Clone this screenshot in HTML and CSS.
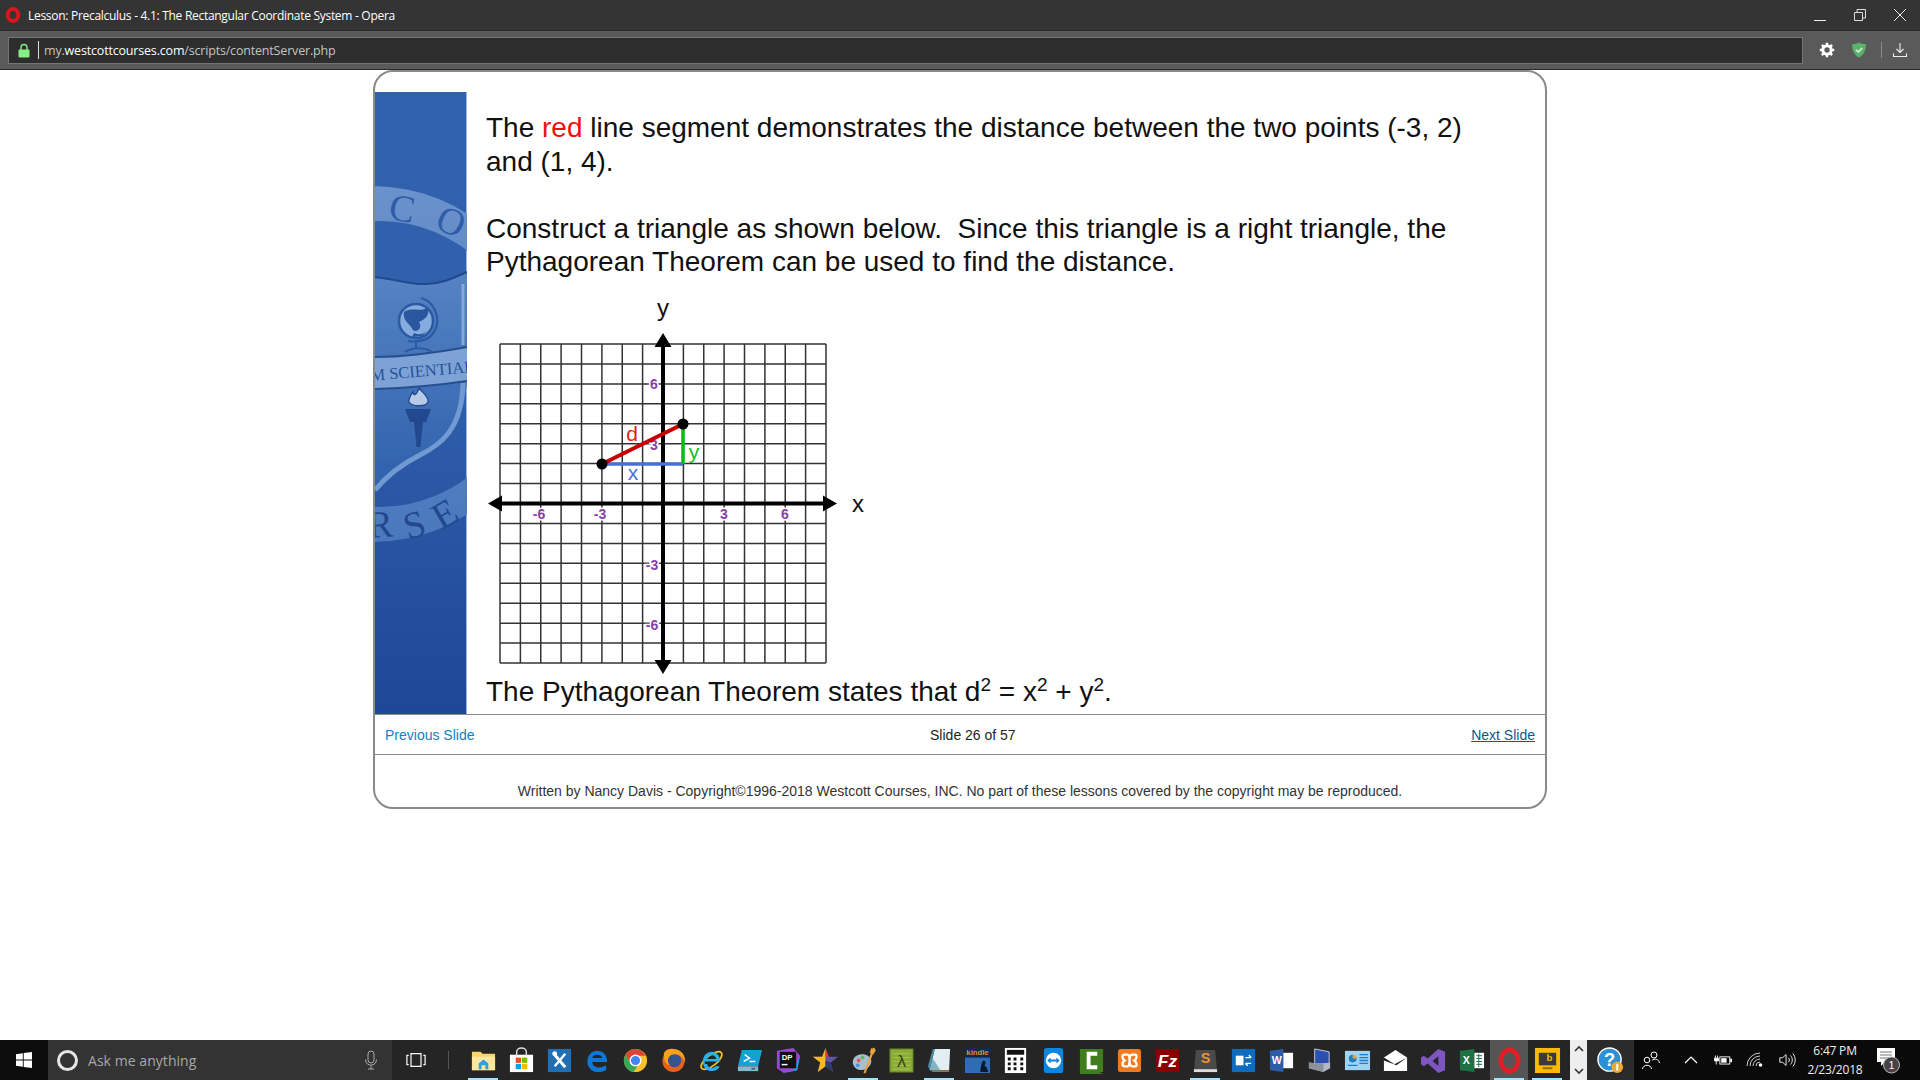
FILE: index.html
```html
<!DOCTYPE html>
<html lang="en">
<head>
<meta charset="utf-8">
<title>Lesson: Precalculus - 4.1: The Rectangular Coordinate System - Opera</title>
<link rel="stylesheet" href="styles.css">
</head>
<body>
<div class="window">
  <header class="titlebar">
    <svg class="opera-mini" viewBox="0 0 16 16"><ellipse cx="8" cy="8" rx="5.300" ry="6" fill="none" stroke="#dc141e" stroke-width="3.800"/></svg>
    <span class="title-text">Lesson: Precalculus - 4.1: The Rectangular Coordinate System - Opera</span>
    <div class="win-controls">
      <svg class="win-btn" viewBox="0 0 14 14"><path d="M1 12.500H13" stroke="#eee" fill="none"/></svg>
      <svg class="win-btn" viewBox="0 0 14 14"><path d="M1.500 4.500H9.500V12.500H1.500ZM4 4.500V1.500H12.500V10H9.500" stroke="#ddd" fill="none"/></svg>
      <svg class="win-btn" viewBox="0 0 14 14"><path d="M1 1L13 13M13 1L1 13" stroke="#eee" fill="none"/></svg>
    </div>
  </header>
  <div class="addressbar">
    <div class="urlfield">
      <svg class="lock" viewBox="0 0 12 15"><path d="M3 7V4.500a3 3 0 0 1 6 0V7" fill="none" stroke="#86f086" stroke-width="1.400"/><rect x="0.500" y="6.500" width="11" height="8" rx="1" fill="#86f086"/></svg>
      <span class="url-sep"></span>
      <span class="url"><span class="dim">my.</span>westcottcourses.com<span class="dim">/scripts/contentServer.php</span></span>
    </div>
    <div class="toolicons">
      <svg class="tool" viewBox="0 0 16 16"><circle cx="8" cy="8" r="4.200" fill="none" stroke="#fff" stroke-width="3"/><path d="M8 0.800V3.500M8 12.500V15.200M0.800 8H3.500M12.500 8H15.200M2.900 2.900L4.800 4.800M11.200 11.200L13.100 13.100M13.100 2.900L11.200 4.800M4.800 11.200L2.900 13.100" stroke="#fff" stroke-width="2.400"/></svg>
      <svg class="tool" viewBox="0 0 16 16"><path d="M8 0.500C10 1.500 12 2 14.800 2 14.900 8 13 13 8 15.500 3 13 1.100 8 1.200 2 4 2 6 1.500 8 .5Z" fill="#5bb36a"/><path d="M5 7.800L7.300 10 11.200 6" fill="none" stroke="#e8f5e8" stroke-width="1.500"/></svg>
      <span class="tool-sep"></span>
      <svg class="tool" viewBox="0 0 16 16"><path d="M8 1V10M4.500 7L8 10.500 11.500 7M1.500 11.500V14.500H14.500V11.500" fill="none" stroke="#eee" stroke-width="1.100"/></svg>
    </div>
  </div>

  <main class="page">
    <article class="card">
      <div class="slide">
        <svg class="sidebar" viewBox="375 92 92 622" preserveAspectRatio="none" aria-hidden="true">
          <defs>
            <linearGradient id="sb" x1="0" y1="0" x2="0" y2="1">
              <stop offset="0" stop-color="#3162ae"/><stop offset=".45" stop-color="#3060ab"/><stop offset="1" stop-color="#1f4797"/>
            </linearGradient>
            <linearGradient id="ringfill" gradientUnits="userSpaceOnUse" x1="0" y1="186" x2="0" y2="545">
              <stop offset="0" stop-color="#6a92cc"/><stop offset=".4" stop-color="#5b85c4"/><stop offset="1" stop-color="#4a78bd"/>
            </linearGradient>
            <linearGradient id="shieldfill" gradientUnits="userSpaceOnUse" x1="0" y1="280" x2="0" y2="470">
              <stop offset="0" stop-color="#5482c3"/><stop offset="1" stop-color="#3263ae"/>
            </linearGradient>
            <filter id="soft"><feGaussianBlur stdDeviation="0.500"/></filter>
          </defs>
          <rect x="375" y="92" width="92" height="622" fill="url(#sb)"/>
          <rect x="466" y="92" width="1" height="622" fill="#9db6dc"/>
          <g filter="url(#soft)">
            <path d="M194 364a178 178 0 1 0 356 0a178 178 0 1 0 -356 0ZM237 364a143 143 0 1 0 286 0a143 143 0 1 0 -286 0Z" fill="url(#ringfill)" fill-rule="evenodd"/>
            <path d="M375 277C400 280 412 285 426 284 442 284 455 277 467 272V380C465 425 440 445 420 455 400 465 385 480 375 490Z" fill="url(#shieldfill)"/>
            <path d="M463 383C462 430 440 445 420 455 400 465 385 478 375 490" fill="none" stroke="#7199d2" stroke-width="5"/>
            <path d="M463 284V345" fill="none" stroke="#87a8da" stroke-width="3"/>
            <path d="M375 277C400 280 412 285 426 284 442 284 455 277 467 272" fill="none" stroke="#234a8f" stroke-width="2"/>
            <path d="M375 357C405 357 440 352 467 347V381C440 385 405 388 375 389Z" fill="#7ca2d6"/>
            <path d="M375 357C405 357 440 352 467 347M375 389C405 388 440 385 467 381" fill="none" stroke="#27508f" stroke-width="2"/>
            <circle cx="416" cy="321" r="17" fill="#86abdf" stroke="#2c5aa3" stroke-width="2.500"/>
            <path d="M404 312C410 307 420 312 427 308 431 315 424 320 419 322 423 328 417 333 413 330 410 324 402 320 404 312Z" fill="#2a579f"/>
            <path d="M428 330C423 335 418 335 414 333L412 337 422 336Z" fill="#2a579f"/>
            <path d="M421 298C434 301 441 318 435 330 431 339 421 343 408 341M416 342V349M405 352C412 347 425 347 432 352" fill="none" stroke="#2c5aa3" stroke-width="2.200"/>
            <path d="M419 388C423 393 429 397 428 402 426 407 412 407 409 402 408 398 411 395 413 392 414 396 416 396 419 388Z" fill="#b7cbe9" stroke="#234a8f" stroke-width="1.400"/>
            <path d="M405 409H431L426 422H410ZM414 422H423L420.500 447H416.500Z" fill="#234a8f"/>
          </g>
          <text class="seal-big" x="400" y="221" transform="rotate(10 400 221)">C</text>
          <text class="seal-big" x="446" y="233" transform="rotate(24 446 233)">O</text>
          <text class="seal-mid" x="371" y="381" transform="rotate(-5 371 381)">M SCIENTIAE</text>
          <text class="seal-low" x="381" y="537" transform="rotate(-3 381 537)">R</text>
          <text class="seal-low" x="418" y="537" transform="rotate(-17 418 537)">S</text>
          <text class="seal-low" x="451" y="525" transform="rotate(-30 451 525)">E</text>
        </svg>
        <section class="lesson">
          <p class="para">The <span class="red">red</span> line segment demonstrates the distance between the two points (-3, 2) and (1, 4).</p>
          <p class="para">Construct a triangle as shown below.&nbsp; Since this triangle is a right triangle, the Pythagorean Theorem can be used to find the distance.</p>
          <svg class="graph" viewBox="486 285 400 388" role="img" aria-label="Coordinate grid with a right triangle">
            <path class="grid" d="M500 343V662M520.400 343V662M540.750 343V662M561.100 343V662M581.500 343V662M601.900 343V662M622.250 343V662M642.600 343V662M683.400 343V662M703.750 343V662M724.100 343V662M744.500 343V662M764.900 343V662M785.250 343V662M805.600 343V662M826 343V662M500 343H826M500 362.900H826M500 382.900H826M500 402.800H826M500 422.750H826M500 442.700H826M500 462.600H826M500 482.600H826M500 522.500H826M500 542.400H826M500 562.300H826M500 582.300H826M500 602.200H826M500 622.200H826M500 642.100H826M500 662H826"/>
            <path class="axis" d="M663 340V665M497 502.500H829"/>
            <path d="M488 502.500L502 494.500V510.500ZM837 502.500L823 494.500V510.500ZM663 332L654.500 346H671.500ZM663 673L654.500 659H671.500Z" fill="#000"/>
            <text class="tick" x="654" y="388">6</text>
            <text class="tick" x="654" y="449">3</text>
            <text class="tick" x="652" y="569">-3</text>
            <text class="tick" x="652" y="629">-6</text>
            <text class="tick" x="539" y="518">-6</text>
            <text class="tick" x="600" y="518">-3</text>
            <text class="tick" x="724" y="518">3</text>
            <text class="tick" x="785" y="518">6</text>
            <path class="seg-blue" d="M602 463H683"/>
            <path class="seg-green" d="M683 423V463"/>
            <path class="seg-red" d="M602 463L683 423"/>
            <circle cx="602" cy="463" r="5.500"/><circle cx="683" cy="423" r="5.500"/>
            <text class="lab-red" x="632" y="440">d</text>
            <text class="lab-green" x="694" y="458">y</text>
            <text class="lab-blue" x="633" y="479">x</text>
            <text class="axis-name" x="858" y="511">x</text>
            <text class="axis-name" x="663" y="315">y</text>
          </svg>
          <p class="para">The Pythagorean Theorem states that d<sup>2</sup> = x<sup>2</sup> + y<sup>2</sup>.</p>
        </section>
      </div>
      <nav class="slidenav">
        <a class="prev">Previous Slide</a>
        <span>Slide 26 of 57</span>
        <a class="next">Next Slide</a>
      </nav>
      <footer class="legal">Written by Nancy Davis - Copyright©1996-2018 Westcott Courses, INC. No part of these lessons covered by the copyright may be reproduced.</footer>
    </article>
  </main>

  <div class="taskbar">
    <div class="start"><svg class="winlogo" viewBox="0 0 16 16"><path d="M0 2.200L6.800 1.200V7.600H0ZM7.700 1.100L16 0V7.600H7.700ZM0 8.400H6.800V14.800L0 13.800ZM7.700 8.400H16V16L7.700 14.900Z" fill="#fff"/></svg></div>
    <div class="search">
      <span class="cortana"></span>
      <span class="ask">Ask me anything</span>
      <svg class="mic" viewBox="0 0 14 20"><rect x="4" y="1" width="6" height="12" rx="3" fill="none" stroke="#aaa"/><path d="M1.500 9.500C1.500 17 12.500 17 12.500 9.500M7 15.500V19M4 19H10" fill="none" stroke="#aaa"/></svg>
    </div>
    <div class="taskview"><svg class="tv" viewBox="0 0 22 16"><path d="M5.500 1H16.500V15H5.500ZM3 3H1V13H3M19 3H21V13H19" fill="none" stroke="#fff" stroke-width="1.300"/></svg><span class="tb-sep"></span></div>
    <div class="apps">
      <span class="app on"><svg class="ic" viewBox="0 0 28 28"><path d="M2 5H11L13 7H26V24H2Z" fill="#f5d56c"/><path d="M2 10H26V24H2Z" fill="#fbe79e"/><path d="M9 23V17L14 13 19 17V23H16V19H12V23Z" fill="#2f9fe0"/></svg></span>
      <span class="app"><svg class="ic" viewBox="0 0 28 28"><path d="M2 8H26V26H2Z" fill="#fff"/><path d="M9 9V5a5 4 0 0 1 10 0V9" fill="none" stroke="#ddd" stroke-width="1.500"/><rect x="8" y="11" width="5.500" height="5.500" fill="#ef4f23"/><rect x="14.500" y="11" width="5.500" height="5.500" fill="#7eba00"/><rect x="8" y="17.500" width="5.500" height="5.500" fill="#00a4ef"/><rect x="14.500" y="17.500" width="5.500" height="5.500" fill="#ffb900"/></svg></span>
      <span class="app"><svg class="ic" viewBox="0 0 28 28"><rect x="2" y="2" width="24" height="24" fill="#1f6fb7"/><path d="M9 8L20 21" stroke="#fff" stroke-width="3"/><path d="M20 7L9 20" stroke="#fff" stroke-width="2.400"/><circle cx="9" cy="7" r="2.500" fill="#fff"/></svg></span>
      <span class="app"><svg class="ic" viewBox="0 0 28 28"><path d="M7 15.500H24C24 8 19 4 14 4 8 4 3.500 9 3.500 15 3.500 22 9 26 14.500 26 18 26 21 25 23 23.500V19C19 22 9.500 23 8.500 15.500M8.500 11.500C9 9 11.500 8 13.500 8 16 8 18.500 9 19 11.500Z" fill="#0f78d4" fill-rule="evenodd"/></svg></span>
      <span class="app"><svg class="ic" viewBox="0 0 28 28"><circle cx="14" cy="14" r="12" fill="#fbc02d"/><path d="M14 2A12 12 0 0 0 3.500 8L9 17 14 9H24.500A12 12 0 0 0 14 2Z" fill="#db4437"/><path d="M3.500 8A12 12 0 0 0 12 26L17.500 18 9 17Z" fill="#3aa757"/><circle cx="14" cy="14" r="5.500" fill="#4285f4" stroke="#fff" stroke-width="1.500"/></svg></span>
      <span class="app"><svg class="ic" viewBox="0 0 28 28"><circle cx="14" cy="14.500" r="11.500" fill="#e8611c"/><circle cx="15" cy="14" r="7" fill="#34548f"/><path d="M4 9C3 4 9 1 14 2 21 2 27 8 26 16 24 9 17 6 12 8 8 10 7 15 10 19 6 18 4 13 4 9Z" fill="#f6a21d"/></svg></span>
      <span class="app"><svg class="ic" viewBox="0 0 28 28"><ellipse cx="14" cy="14" rx="13" ry="5.500" transform="rotate(-38 14 14)" fill="none" stroke="#f2c21a" stroke-width="1.800"/><path d="M7 15H23C23 9 19 5 14.500 5 9 5 5 9.500 5 15 5 21 9 25 14.500 25 18 25 21 23.500 22.500 20H18C16 23 10 22 9.500 17.500H7ZM9.500 12.500C10 10 12 8.500 14.500 8.500 16.500 8.500 18.500 10 19 12.500Z" fill="#2ab0e8" fill-rule="evenodd"/></svg></span>
      <span class="app"><svg class="ic" viewBox="0 0 28 28"><path d="M6 3H27L23 20H2Z" fill="#16a0d8"/><path d="M2 20H23V25H2Z" fill="#8fb5c6"/><path d="M9 8L14 11.500 8 15M14 15H20" fill="none" stroke="#fff" stroke-width="1.500"/><rect x="16" y="21.500" width="4" height="2" fill="#3e6a80"/></svg></span>
      <span class="app"><svg class="ic" viewBox="0 0 28 28"><path d="M3 4L20 1 27 9 24 24 10 27 3 22Z" fill="#9b45d6"/><path d="M20 24L27 9 24 24 10 27Z" fill="#1e9fe8"/><rect x="6" y="5" width="17" height="17" fill="#111"/><text class="dp" x="8" y="13">DP</text><rect x="8" y="17.500" width="6" height="1.500" fill="#fff"/></svg></span>
      <span class="app"><svg class="ic" viewBox="0 0 28 28"><path d="M14 1L17.500 10H27L19.500 16 22 26 14 20 6 26 8.500 16 1 10H10.500Z" fill="#5f56a8"/><path d="M14 1L14 20 6 26 8.500 16 1 10H10.500Z" fill="#f7b81f"/><path d="M14 1L17.500 10H14Z" fill="#d93a36"/><path d="M14 20L22 26 19.500 16 14 14Z" fill="#2e3b6e"/></svg></span>
      <span class="app on"><svg class="ic" viewBox="0 0 28 28"><path d="M3 17C2 10 9 6 16 8 22 10 24 15 20 20 15 26 5 25 3 17Z" fill="#a9bfd0"/><circle cx="9" cy="14" r="2" fill="#e85a4f"/><circle cx="13" cy="11" r="2" fill="#5fb760"/><circle cx="8" cy="19" r="2" fill="#4a8fe0"/><path d="M25 1L15 27" stroke="#e8a33d" stroke-width="2.200"/><path d="M22 1L27 3 24 8 20.500 6Z" fill="#e8a33d"/></svg></span>
      <span class="app"><svg class="ic" viewBox="0 0 28 28"><rect x="2" y="2" width="24" height="24" fill="#8aab35" stroke="#5d7a21"/><path d="M5 7H23M5 11H23M5 15H23M5 19H23M5 23H23" stroke="#a6c654"/><text class="lam" x="14" y="21">λ</text></svg></span>
      <span class="app on"><svg class="ic" viewBox="0 0 28 28"><path d="M9 2H25L24 24H4Z" fill="#e3eef2"/><path d="M9 2L4 24 2 20 7 2Z" fill="#4d8a9e"/><path d="M7 12L4 24H15Z" fill="#7fb4c4"/><path d="M7 24H24V26H6Z" fill="#8a7a55"/></svg></span>
      <span class="app"><svg class="ic" viewBox="0 0 28 28"><rect x="1" y="1" width="26" height="26" rx="1" fill="#0c2a52"/><path d="M1 11H27V27H1Z" fill="#2f6cb5"/><text class="kin" x="14" y="8">kindle</text><path d="M17 26C17 21 18 17 20 14 23 14 23 18 21 19 24 21 25 24 25 26Z" fill="#08182f"/></svg></span>
      <span class="app"><svg class="ic" viewBox="0 0 28 28"><rect x="3" y="1" width="22" height="26" fill="#fff"/><rect x="5" y="3" width="18" height="5" fill="#111"/><path d="M6 11h3v3H6zM12 11h3v3h-3zM19 11h3v3h-3zM6 16h3v3H6zM12 16h3v3h-3zM19 16h3v3h-3zM6 21h3v3H6zM12 21h3v3h-3zM19 21h3v3h-3z" fill="#111"/></svg></span>
      <span class="app"><svg class="ic" viewBox="0 0 28 28"><rect x="4" y="1" width="20" height="26" rx="3" fill="#0e86e0"/><circle cx="14" cy="14" r="8" fill="#fff"/><path d="M7.500 14L11 11V13H17V11L20.500 14 17 17V15H11V17Z" fill="#0e86e0"/></svg></span>
      <span class="app"><svg class="ic" viewBox="0 0 28 28"><path d="M2 2H26V26H22L26 28H2Z" fill="#3f7d1e"/><path d="M20 7H11V21H20" fill="none" stroke="#fff" stroke-width="4"/></svg></span>
      <span class="app"><svg class="ic" viewBox="0 0 28 28"><rect x="2" y="2" width="24" height="24" rx="3" fill="#ee7b22"/><path d="M9 8H12C14 8 14 12 14 14 14 12 14 8 17 8H20C22 8 22 12 19 14 22 16 22 20 20 20H17C14 20 14 16 14 14 14 16 14 20 12 20H9C6 20 6 16 9 14 6 12 6 8 9 8Z" fill="none" stroke="#fff" stroke-width="2.400"/></svg></span>
      <span class="app"><svg class="ic" viewBox="0 0 28 28"><rect x="2" y="2" width="24" height="24" fill="#8a0000"/><text class="fz" x="14" y="21">Fz</text></svg></span>
      <span class="app on"><svg class="ic" viewBox="0 0 28 28"><path d="M4 3H24L26 25H2Z" fill="#4a4a4a"/><path d="M2 23H26V26H2Z" fill="#ddd"/><text class="sub" x="14" y="17">S</text></svg></span>
      <span class="app"><svg class="ic" viewBox="0 0 28 28"><rect x="2" y="2" width="24" height="24" fill="#0f6cbd"/><rect x="6" y="9" width="8" height="10" fill="#fff"/><path d="M16 11H22M22 11L19.500 8.500M22 17H16M16 17L18.500 19.500" fill="none" stroke="#fff" stroke-width="1.500"/></svg></span>
      <span class="app"><svg class="ic" viewBox="0 0 28 28"><rect x="13" y="6" width="13" height="16" fill="#fff"/><path d="M2 4L16 2V26L2 24Z" fill="#2b5da8"/><text class="xl" x="4" y="18">W</text></svg></span>
      <span class="app"><svg class="ic" viewBox="0 0 28 28"><path d="M9 2L24 5V17L9 18Z" fill="#2c4fb0" stroke="#c4cfe0"/><path d="M3 16L18 18 25 16V22L18 26 3 22Z" fill="#b3b9c2"/><path d="M3 16L18 18V26L3 22Z" fill="#8b929c"/></svg></span>
      <span class="app"><svg class="ic" viewBox="0 0 28 28"><rect x="1" y="4" width="26" height="20" fill="#9fd3f0"/><circle cx="9" cy="12" r="4" fill="#1e7fc4"/><path d="M9 12V8A4 4 0 0 1 13 12Z" fill="#f2a33a"/><path d="M16 8H25M16 11H25M16 14H25M16 17H25M4 19H14" stroke="#1e7fc4" stroke-width="1.300"/></svg></span>
      <span class="app"><svg class="ic" viewBox="0 0 28 28"><path d="M2 11L14 3 26 11V25H2Z" fill="#fff"/><path d="M2 11L13 18 26 11 15 19 2 14Z" fill="#222"/></svg></span>
      <span class="app"><svg class="ic" viewBox="0 0 28 28"><path d="M19 2L26 5V24L19 27 8 17 4 20 1 18V11L4 9 8 12ZM19 9.500L13 14.500 19 19.500Z" fill="#7d56c2" fill-rule="evenodd"/></svg></span>
      <span class="app"><svg class="ic" viewBox="0 0 28 28"><path d="M2 4L17 2V26L2 24Z" fill="#1e7145"/><path d="M17 6H27V22H17Z" fill="#fff"/><path d="M19 9H25M19 12H25M19 15H25M19 18H25M21.500 7V21" stroke="#1e7145"/><text class="xl" x="5" y="18">X</text></svg></span>
      <span class="app on cur"><svg class="ic" viewBox="0 0 28 28"><ellipse cx="14" cy="14" rx="9" ry="11" fill="none" stroke="#de1f28" stroke-width="5"/></svg></span>
      <span class="app on"><svg class="ic" viewBox="0 0 28 28"><rect x="1" y="1" width="26" height="26" fill="#ffb900"/><rect x="5" y="6" width="18" height="13" fill="#3a3a3a"/><path d="M9 21H19V23H9Z" fill="#8a6a00"/><text class="bing" x="13" y="15">b</text></svg></span>
    </div>
    <div class="overflow">
      <svg class="chev" viewBox="0 0 12 8"><path d="M2 6L6 2 10 6" fill="none" stroke="#333" stroke-width="1.600"/></svg>
      <svg class="chev" viewBox="0 0 12 8"><path d="M2 2L6 6 10 2" fill="none" stroke="#333" stroke-width="1.600"/></svg>
    </div>
    <div class="helpcell"><svg class="ic" viewBox="0 0 28 28"><circle cx="13" cy="13" r="12" fill="#2a90d8" stroke="#fff" stroke-width="1.500"/><text class="q" x="13" y="20">?</text><circle cx="21" cy="21" r="6" fill="#f0a830"/><rect x="20" y="17.500" width="2" height="7" fill="#fff"/></svg></div>
    <div class="tray">
      <span class="t t-people"><svg class="tr" viewBox="0 0 20 20"><circle cx="13" cy="5" r="3" fill="none" stroke="#fff"/><circle cx="6" cy="10" r="2.800" fill="none" stroke="#fff"/><path d="M1.500 19C2 14 10 14 10.500 19M11 10.500C13 8 18 9 18.500 13" fill="none" stroke="#fff"/></svg></span>
      <span class="t t-chev"><svg class="tr" viewBox="0 0 20 20"><path d="M4 13L10 7 16 13" fill="none" stroke="#fff" stroke-width="1.200"/></svg></span>
      <span class="t t-batt"><svg class="tr" viewBox="0 0 20 20"><path d="M1.500 5V8M4 5V8M0.500 8H5V11H0.500ZM2.500 11V15" stroke="#fff" fill="#fff"/><rect x="6.500" y="6.500" width="11" height="8" fill="none" stroke="#fff"/><rect x="8" y="8" width="6" height="5" fill="#fff"/><rect x="18" y="8.500" width="2" height="4" fill="#fff"/></svg></span>
      <span class="t t-wifi"><svg class="tr" viewBox="0 0 20 20"><path d="M2 16A13 13 0 0 1 15 3M5 16A10 10 0 0 1 15 6M8 16A7 7 0 0 1 15 9M11 16A4 4 0 0 1 15 12" fill="none" stroke="#ccc"/><circle cx="15.500" cy="15" r="1.800" fill="#fff"/></svg></span>
      <span class="t t-vol"><svg class="tr" viewBox="0 0 20 20"><path d="M2 7.500H5L9 4V16L5 12.500H2Z" fill="none" stroke="#fff"/><path d="M11.500 7.500C13 9 13 11 11.500 12.500M14 5C16.500 8 16.500 12 14 15M16.500 2.800C20 7 20 13 16.500 17.200" fill="none" stroke="#fff"/></svg></span>
      <div class="clock"><span>6:47 PM</span><span>2/23/2018</span></div>
      <span class="t t-note"><svg class="note" viewBox="0 0 26 28"><path d="M2 2H20V16H10L6 20V16H2Z" fill="#fff"/><path d="M5 6H17M5 9H17M5 12H14" stroke="#777"/><circle cx="16.500" cy="19" r="8" fill="#444" stroke="#bbb"/><text class="badge" x="16.500" y="23">1</text></svg></span>
    </div>
  </div>
</div>
</body>
</html>
```
FILE: styles.css
```css
* { box-sizing: border-box; }
html, body { margin: 0; height: 100%; background: #fff; }
body { font-family: "Liberation Sans", Arial, sans-serif; overflow: hidden; }

.window { display: flex; flex-direction: column; height: 1080px; }

/* Browser chrome */
.titlebar {
  height: 30px; flex: none; display: flex; align-items: center;
  background: #343434; color: #fff; padding-left: 5px;
  font: 12px "Open Sans", "Noto Sans", sans-serif;
}
.opera-mini { width: 16px; height: 16px; }
.title-text { margin-left: 7px; letter-spacing: -0.29px; }
.win-controls { margin-left: auto; display: flex; gap: 26px; padding-right: 13px; }
.win-btn { width: 14px; height: 14px; }

.addressbar {
  height: 40px; flex: none; display: flex; align-items: center;
  background: #5a5a5a; border-top: 1px solid #2a2a2a; border-bottom: 1px solid #2a2a2a; padding: 0 0 0 8px;
}
.urlfield {
  width: 1795px; height: 27px; flex: none; display: flex; align-items: center;
  background: #2c2d2c; border: 1px solid #747474; padding-left: 9px;
}
.lock { width: 12px; height: 15px; }
.url-sep { width: 1px; height: 18px; background: #ddd; margin: 0 5px 0 8px; }
.url { font: 12.5px "Open Sans", "Noto Sans", sans-serif; color: #fff; letter-spacing: -0.18px; }
.dim { color: #c4c4c4; }
.toolicons { display: flex; align-items: center; margin-left: 16px; flex: none; }
.tool { width: 16px; height: 16px; margin-right: 16px; }
.tool-sep { width: 1px; height: 16px; background: #888; margin: 0 10px 0 -2px; }

/* Page */
.page { flex: 1; padding-left: 373px; background: #fff; min-height: 0; }
.card {
  width: 1174px; height: 739px; padding-top: 20px;
  background: #fff; border: 2px solid #8a8a8a; border-radius: 20px;
  display: flex; flex-direction: column;
}
.slide { display: flex; height: 622px; flex: none; }
.sidebar { width: 92px; height: 622px; flex: none; display: block; }
.seal-big { font: 38px "Liberation Serif", serif; fill: #2f5da8; text-anchor: middle; }
.seal-low { font: 38px "Liberation Serif", serif; fill: #22498f; text-anchor: middle; }
.seal-mid { font: 16.5px "Liberation Serif", serif; fill: #2a5299; }

.lesson { padding: 19px 0 0 19px; flex: 1; min-width: 0; }
.para { margin: 0 0 33.5px; font-size: 28px; line-height: 33.5px; color: #111; width: 1005px; }
.para:last-child { margin: 0; }
.para sup { font-size: 19px; line-height: 0; }
.red { color: #f01010; }

.graph { display: block; width: 400px; height: 388px; margin-top: -26px; margin-bottom: 1px; }
.grid { fill: none; stroke: #333; stroke-width: 1.5; }
.axis { fill: none; stroke: #000; stroke-width: 4; }
.tick { font: bold 14px "Liberation Sans", sans-serif; fill: #8a3fa8; text-anchor: middle; paint-order: stroke; stroke: #fff; stroke-width: 3px; }
.seg-blue { stroke: #4a70d4; stroke-width: 3.5; fill: none; }
.seg-green { stroke: #00c010; stroke-width: 3.5; fill: none; }
.seg-red { stroke: #c80000; stroke-width: 4; fill: none; }
.lab-red, .lab-green, .lab-blue { font: 21px "Liberation Sans", sans-serif; text-anchor: middle; }
.lab-red { fill: #e02020; }
.lab-green { fill: #10c020; }
.lab-blue { fill: #4a70d4; }
.axis-name { font: 24px "Liberation Sans", sans-serif; text-anchor: middle; fill: #111; }

/* Slide nav */
.slidenav {
  height: 41px; flex: none; display: flex; justify-content: space-between; align-items: center;
  padding: 0 10px; border-top: 1px solid #8a8a8a; border-bottom: 1px solid #8a8a8a;
  font-size: 14px; color: #222;
}
.prev { color: #0a84c8; }
.next { color: #0b5a8a; text-decoration: underline; }
.legal { text-align: center; font-size: 14px; color: #333; padding-top: 28px; }

/* Taskbar */
.taskbar { height: 40px; flex: none; display: flex; background: #252525; color: #fff; }
.start { width: 48px; background: #0c0c0c; display: flex; align-items: center; justify-content: center; }
.winlogo { width: 16px; height: 16px; }
.search { width: 344px; background: #333; display: flex; align-items: center; padding-left: 9px; }
.cortana { width: 21px; height: 21px; border-radius: 50%; border: 3px solid #e6e6e6; flex: none; }
.ask { margin-left: 10px; font: 14px "Open Sans", "Noto Sans", sans-serif; color: #a8a8a8; letter-spacing: 0.05px; }
.mic { width: 14px; height: 20px; margin-left: auto; margin-right: 14px; }
.taskview { width: 72px; display: flex; align-items: center; padding-left: 14px; }
.tv { width: 20px; height: 16px; }
.tb-sep { width: 1px; height: 18px; background: #555; margin-left: 22px; }
.apps { display: flex; }
.app { width: 38px; height: 40px; display: flex; align-items: center; justify-content: center; position: relative; }
.app.on::after { content: ""; position: absolute; left: 4px; right: 4px; bottom: 0; height: 2px; background: #a6e3fb; }
.app.cur { background: #555; }
.ic { width: 27px; height: 27px; }
.dp { font: bold 8px "Liberation Sans", sans-serif; fill: #fff; }
.lam { font: 17px "DejaVu Sans", sans-serif; fill: #3c4a10; text-anchor: middle; }
.kin { font: bold 8px "Liberation Sans", sans-serif; fill: #e88a1a; text-anchor: middle; }
.fz { font: italic bold 18px "Liberation Sans", sans-serif; fill: #fff; text-anchor: middle; }
.sub { font: bold 15px "Liberation Sans", sans-serif; fill: #e89530; text-anchor: middle; }
.xl { font: bold 11px "Liberation Sans", sans-serif; fill: #fff; }
.bing { font: bold 10px "Liberation Sans", sans-serif; fill: #ffb900; }
.q { font: bold 19px "Liberation Sans", sans-serif; fill: #fff; text-anchor: middle; }
.overflow { width: 17px; margin-left: 4px; background: #eee; display: flex; flex-direction: column; align-items: center; justify-content: space-between; padding: 5px 0; }
.chev { width: 12px; height: 8px; }
.helpcell { width: 47px; display: flex; align-items: center; justify-content: center; background: #2b2b2b; }
.tray { flex: 1; background: #0a0a0a; display: flex; align-items: center; }
.t { display: flex; align-items: center; justify-content: center; height: 40px; }
.tr { width: 20px; height: 20px; }
.t-people { width: 34px; }
.t-chev { width: 46px; }
.t-batt { width: 18px; }
.t-wifi { width: 46px; }
.t-vol { width: 18px; }
.clock { width: 78px; display: flex; flex-direction: column; align-items: center; gap: 3px; font: 12px/16px "Open Sans", "Noto Sans", sans-serif; color: #eee; letter-spacing: -0.2px; }
.t-note { width: 28px; }
.note { width: 26px; height: 28px; }
.badge { font: 10px "Liberation Sans", sans-serif; fill: #fff; text-anchor: middle; }
```
